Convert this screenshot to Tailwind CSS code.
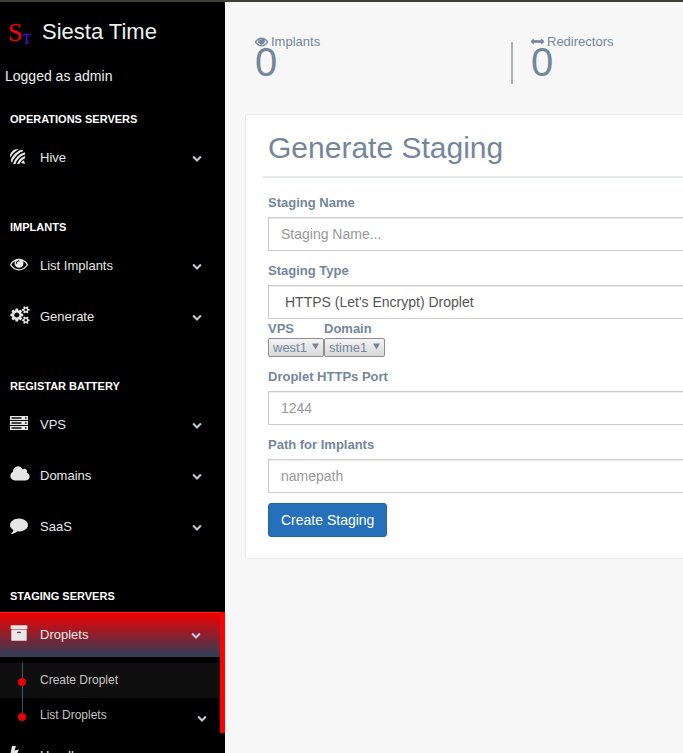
<!DOCTYPE html>
<html lang="en">
<head>
<meta charset="utf-8">
<title>Siesta Time</title>
<script src="https://cdn.jsdelivr.net/npm/@tailwindcss/browser@4"></script>
</head>
<body class="h-screen overflow-hidden bg-[#f7f7f7] font-['Liberation_Sans',Arial,sans-serif] text-[13px] leading-[18px] text-[#73879c]">
<svg class="hidden" aria-hidden="true">
  <symbol id="chevron" viewBox="0 0 1792 1792"><path d="M1683 808l-742 741q-19 19-45 19t-45-19l-742-741q-19-19-19-45.5t19-45.5l166-165q19-19 45-19t45 19l531 531 531-531q19-19 45-19t45 19l166 165q19 19 19 45.5t-19 45.5z"/></symbol>
  <symbol id="eye" viewBox="0 0 1792 1792"><path d="M1664 960q-152-236-381-353 61 104 61 225 0 185-131.5 316.5t-316.5 131.5-316.5-131.5-131.5-316.5q0-121 61-225-229 117-381 353 133 205 333.5 326.5t434.5 121.5 434.5-121.5 333.5-326.5zm-720-384q0-20-14-34t-34-14q-125 0-214.5 89.5t-89.5 214.5q0 20 14 34t34 14 34-14 14-34q0-86 61-147t147-61q20 0 34-14t14-34zm848 384q0 34-20 69-140 230-376.5 368.5t-499.5 138.5-499.5-139-376.5-368q-20-35-20-69t20-69q140-229 376.5-368t499.5-139 499.5 139 376.5 368q20 35 20 69z"/></symbol>
</svg>
<div class="flex h-full border-t-2 border-[#3f3f3a]">

  <aside class="w-[225px] shrink-0 bg-black text-[#e7e7e7]">
    <a href="#" class="flex h-[60px] items-center pl-2">
      <span class="flex w-[34px] items-baseline pt-px font-['Liberation_Serif',serif]" aria-hidden="true"><span class="text-[26px] leading-[30px] text-[#f00]">S</span><span class="relative top-[3px] text-[14px] leading-4 text-[#5010ff]">T</span></span>
      <span class="text-[22px] leading-[30px] text-[#ecf0f1]">Siesta Time</span>
    </a>
    <p class="mt-1 pl-[5px] text-[14px] leading-5 text-[#ecf0f1]">Logged as admin</p>

    <nav class="pt-[25px]">
      <section>
        <h3 class="mb-2 pl-[10px] text-[11px] leading-4 font-bold text-white uppercase">Operations Servers</h3>
        <ul>
          <li class="mb-1.5"><a href="#" class="flex h-[45px] items-center border-t border-transparent pl-[10px] pr-[23px]">
            <svg class="mb-1 h-[15px] w-[15px]" viewBox="0 0 15 15" fill="none" stroke="#e7e7e7" stroke-width="2.2"><clipPath id="disc"><path d="M8 0Q12 0 15 3V15H3Q0 12 0 8Q0 0 8 0Z"/></clipPath><g clip-path="url(#disc)"><circle cx="19" cy="19" r="22.600"/><circle cx="19" cy="19" r="18.900"/><circle cx="19" cy="19" r="15.200"/><circle cx="19" cy="19" r="11.500"/></g><path d="M15 15L14 11.200Q12 12.300 11 14Z" fill="#e7e7e7" stroke="none"/></svg>
            <span class="ml-[15px] flex-1">Hive</span><svg class="h-[10px] w-[10px] fill-[#bfcbd9]"><use href="#chevron"/></svg></a></li>
        </ul>
      </section>

      <section class="mt-[39px]">
        <h3 class="mb-2 pl-[10px] text-[11px] leading-4 font-bold text-white uppercase">Implants</h3>
        <ul>
          <li class="mb-1.5"><a href="#" class="flex h-[45px] items-center border-t border-transparent pl-[10px] pr-[23px]">
            <svg class="mb-1 h-[18px] w-[18px] fill-[#e7e7e7]"><use href="#eye"/></svg>
            <span class="ml-3 flex-1">List Implants</span><svg class="h-[10px] w-[10px] fill-[#bfcbd9]"><use href="#chevron"/></svg></a></li>
          <li class="mb-1.5"><a href="#" class="flex h-[45px] items-center border-t border-transparent pl-[10px] pr-[23px]">
            <svg class="mb-1 h-[18px] w-[20px] fill-[#e7e7e7]" viewBox="0 0 1920 1792"><path d="M896 896q0-106-75-181t-181-75-181 75-75 181 75 181 181 75 181-75 75-181zm768 512q0-52-38-90t-90-38-90 38-38 90q0 53 37.500 90.500t90.500 37.500 90.500-37.500 37.500-90.500zm0-1024q0-52-38-90t-90-38-90 38-38 90q0 53 37.500 90.500t90.500 37.500 90.500-37.500 37.500-90.500zm-384 421v185q0 10-7 19.500t-16 10.500l-155 24q-11 35-32 76 34 48 90 115 7 11 7 20 0 12-7 19-23 30-82.500 89.500t-78.500 59.500q-11 0-21-7l-115-90q-37 19-77 31-11 108-23 155-7 24-30 24h-186q-11 0-20-7.500t-10-17.500l-23-153q-34-10-75-31l-118 89q-7 7-20 7-11 0-21-8-144-133-144-160 0-9 7-19 10-14 41-53t47-61q-23-44-35-82l-152-24q-10-1-17-9.500t-7-19.500v-185q0-10 7-19.500t16-10.500l155-24q11-35 32-76-34-48-90-115-7-11-7-20 0-12 7-20 22-30 82-89t79-59q11 0 21 7l115 90q34-18 77-32 11-108 23-154 7-24 30-24h186q11 0 20 7.500t10 17.500l23 153q34 10 75 31l118-89q8-7 20-7 11 0 21 8 144 133 144 160 0 8-7 19-12 16-42 54t-45 60q23 48 34 82l152 23q10 2 17 10.500t7 19.500zm640 533v140q0 16-149 31-12 27-30 52 51 113 51 138 0 4-4 7-122 71-124 71-8 0-46-47t-52-68q-20 2-30 2t-30-2q-14 21-52 68t-46 47q-2 0-124-71-4-3-4-7 0-25 51-138-18-25-30-52-149-15-149-31v-140q0-16 149-31 13-29 30-52-51-113-51-138 0-4 4-7 4-2 35-20t59-34 30-16q8 0 46 46.500t52 67.500q20-2 30-2t30 2q51-71 92-112l6-2q4 0 124 70 4 3 4 7 0 25-51 138 17 23 30 52 149 15 149 31zm0-1024v140q0 16-149 31-12 27-30 52 51 113 51 138 0 4-4 7-122 71-124 71-8 0-46-47t-52-68q-20 2-30 2t-30-2q-14 21-52 68t-46 47q-2 0-124-71-4-3-4-7 0-25 51-138-18-25-30-52-149-15-149-31v-140q0-16 149-31 13-29 30-52-51-113-51-138 0-4 4-7 4-2 35-20t59-34 30-16q8 0 46 46.500t52 67.500q20-2 30-2t30 2q51-71 92-112l6-2q4 0 124 70 4 3 4 7 0 25-51 138 17 23 30 52 149 15 149 31z"/></svg>
            <span class="ml-[10px] flex-1">Generate</span><svg class="h-[10px] w-[10px] fill-[#bfcbd9]"><use href="#chevron"/></svg></a></li>
        </ul>
      </section>

      <section class="mt-[39px]">
        <h3 class="mb-2 pl-[10px] text-[11px] leading-4 font-bold text-white uppercase">Registar Battery</h3>
        <ul>
          <li class="mb-1.5"><a href="#" class="flex h-[45px] items-center border-t border-transparent pl-[10px] pr-[23px]">
            <svg class="mb-1 h-[18px] w-[18px]" viewBox="0 0 18 18" fill="#e7e7e7"><path d="M0 2h18v4H0zM0 7h18v4H0zM0 12h18v4H0z"/><path fill="#444" d="M1.500 3h10v2h-10zM1.500 8h10v2h-10zM1.500 13h10v2h-10z"/><path fill="#000" d="M15 3.200h1.500v1.500H15zM15 8.200h1.500v1.500H15zM15 13.200h1.500v1.500H15z"/></svg>
            <span class="ml-3 flex-1">VPS</span><svg class="h-[10px] w-[10px] fill-[#bfcbd9]"><use href="#chevron"/></svg></a></li>
          <li class="mb-1.5"><a href="#" class="flex h-[45px] items-center border-t border-transparent pl-[10px] pr-[23px]">
            <svg class="mb-1 h-[18px] w-[20px] fill-[#e7e7e7]" viewBox="0 0 1920 1792"><path d="M1920 1152q0 159-112.500 271.500t-271.500 112.500h-1088q-185 0-316.500-131.500t-131.500-316.500q0-132 71-241.500t187-163.500q-2-28-2-43 0-212 150-362t362-150q158 0 286.500 88t187.500 230q70-62 166-62 106 0 181 75t75 181q0 75-41 138 129 30 213 134.500t84 239.500z"/></svg>
            <span class="ml-[10px] flex-1">Domains</span><svg class="h-[10px] w-[10px] fill-[#bfcbd9]"><use href="#chevron"/></svg></a></li>
          <li class="mb-1.5"><a href="#" class="flex h-[45px] items-center border-t border-transparent pl-[10px] pr-[23px]">
            <svg class="mb-1 h-[18px] w-[18px] fill-[#e7e7e7]" viewBox="0 0 1792 1792"><path d="M1792 896q0 174-120 321.500t-326 233-450 85.500q-70 0-145-8-198 175-460 242-49 14-114 22-17 2-30.500-9t-17.500-29v-1q-3-4-.5-12t2-10 4.500-9.500l6-9 7-8.500 8-9q7-8 31-34.500t34.500-38 31-39.500 32.500-51 27-59 26-76q-157-89-247.500-220t-90.500-281q0-130 71-248.500t191-204.500 286-136.500 348-50.500q244 0 450 85.500t326 233 120 321.500z"/></svg>
            <span class="ml-3 flex-1">SaaS</span><svg class="h-[10px] w-[10px] fill-[#bfcbd9]"><use href="#chevron"/></svg></a></li>
        </ul>
      </section>

      <section class="mt-[39px]">
        <h3 class="mb-2 pl-[10px] text-[11px] leading-4 font-bold text-white uppercase">Staging Servers</h3>
        <ul>
          <li class="border-r-[5px] border-[#f00]">
            <a href="#" class="flex h-[45px] items-center border-t border-[#f22] bg-linear-to-b/srgb from-[#ee0000] to-[#2c4059] pl-[10px] pr-[19px]">
              <svg class="mb-1 h-[18px] w-[18px] fill-[#e7e7e7]" viewBox="0 0 1792 1792"><path d="M1088 832q0-26-19-45t-45-19h-256q-26 0-45 19t-19 45 19 45 45 19h256q26 0 45-19t19-45zm576-192v960q0 26-19 45t-45 19h-1408q-26 0-45-19t-19-45v-960q0-26 19-45t45-19h1408q26 0 45 19t19 45zm64-448v256q0 26-19 45t-45 19h-1536q-26 0-45-19t-19-45v-256q0-26 19-45t45-19h1536q26 0 45 19t19 45z"/></svg>
              <span class="ml-3 flex-1">Droplets</span><svg class="h-[10px] w-[10px] fill-[#bfcbd9]"><use href="#chevron"/></svg></a>
            <ul class="mt-1.5 text-[12px] text-[#c4c4c4]">
              <li><a href="#" class="relative flex h-[35px] items-center bg-[#0f0f0f] pb-[2px] pl-[40px] before:absolute before:inset-y-0 before:left-[22px] before:w-px before:bg-[#425668] after:absolute after:top-[15px] after:left-[18px] after:h-2 after:w-2 after:rounded-full after:bg-[#e80000]">Create Droplet</a></li>
              <li><a href="#" class="relative flex h-[35px] items-center pb-[2px] pl-[40px] pr-[13px] before:absolute before:top-0 before:left-[22px] before:h-4 before:w-px before:bg-[#425668] after:absolute after:top-[15px] after:left-[18px] after:h-2 after:w-2 after:rounded-full after:bg-[#e80000]"><span class="flex-1">List Droplets</span><svg class="mt-1.5 h-[10px] w-[10px] fill-[#bfcbd9]"><use href="#chevron"/></svg></a></li>
            </ul>
          </li>
          <li><a href="#" class="flex h-[45px] items-center border-t border-transparent pl-[10px] pr-[23px]">
            <svg class="mb-1 h-[18px] w-[9px] fill-[#e7e7e7]" viewBox="0 0 9 18"><path d="M2 1h4L4.500 5.500 9 4.500 3.500 17 5 8.500.3 9.500z"/></svg>
            <span class="ml-[21px] flex-1">Handler</span><svg class="h-[10px] w-[10px] fill-[#bfcbd9]"><use href="#chevron"/></svg></a></li>
        </ul>
      </section>
    </nav>
  </aside>

  <main class="min-w-0 flex-1 overflow-hidden">
    <div class="min-w-[850px] px-5">
      <div class="flex h-[112px] pt-[31px]">
        <div class="w-[266px] pl-[10px]">
          <div class="flex h-[18px] items-center gap-[3px]"><svg class="mb-[2px] h-[13px] w-[13px] fill-[#73879c] stroke-[#73879c] stroke-[60px]"><use href="#eye"/></svg>Implants</div>
          <div class="-mt-2 text-[40px] leading-[38px]">0</div>
        </div>
        <div class="mt-[9px] h-[42px] w-[2px] bg-[#adb2b5]"></div>
        <div class="pl-[18px]">
          <div class="flex h-[18px] items-center gap-[3px]"><svg class="mb-[2px] h-[13px] w-[13px] fill-[#73879c] stroke-[#73879c] stroke-[90px]" viewBox="0 0 1792 1792"><path d="M1792 896q0 26-19 45l-256 256q-19 19-45 19t-45-19-19-45v-128h-1024v128q0 26-19 45t-45 19-45-19l-256-256q-19-19-19-45t19-45l256-256q19-19 45-19t45 19 19 45v128h1024v-128q0-26 19-45t45-19 45 19l256 256q19 19 19 45z"/></svg>Redirectors</div>
          <div class="-mt-2 text-[40px] leading-[38px]">0</div>
        </div>
      </div>

      <div class="border border-[#e6e9ed] bg-white px-[17px] pt-[10px] pb-[21px]">
        <h2 class="border-b-2 border-[#e6e9ed] px-[5px] pt-[6px] pb-[11px] text-[30px] leading-[34px]">Generate Staging</h2>
        <form class="px-[5px] pt-4">
          <label for="name" class="mb-[5px] block font-bold">Staging Name</label>
          <input id="name" type="text" placeholder="Staging Name..." class="mb-[11px] block h-[34px] w-full border border-[#ccc] px-3 text-[14px] text-[#555] shadow-[inset_0_1px_1px_rgba(0,0,0,0.075)] placeholder:text-[#999]">
          <label for="type" class="mb-[5px] block font-bold">Staging Type</label>
          <select id="type" class="block h-[34px] w-full appearance-none border border-[#ccc] bg-white px-4 text-[14px] text-[#555] shadow-[inset_0_1px_1px_rgba(0,0,0,0.075)]"><option>HTTPS (Let's Encrypt) Droplet</option></select>
          <div class="mb-[11px] flex pt-px">
            <div class="w-[56px]">
              <label for="vps" class="block font-bold">VPS</label>
              <div class="relative">
                <select id="vps" class="block h-[19px] w-full appearance-none rounded-[2px] border border-[#8f8f8f] bg-linear-to-b from-[#f4f4f4] to-[#d8d8d8] pl-1 text-[13px] leading-[17px] text-[#73879c]"><option>west1</option></select>
                <svg class="pointer-events-none absolute top-[5px] right-[5px] h-[7px] w-[7px] fill-[#73879c]" viewBox="0 0 7 7"><path d="M0 .5h7L3.500 6.500z"/></svg>
              </div>
            </div>
            <div class="w-[61px]">
              <label for="domain" class="block font-bold">Domain</label>
              <div class="relative">
                <select id="domain" class="block h-[19px] w-full appearance-none rounded-[2px] border border-[#8f8f8f] bg-linear-to-b from-[#f4f4f4] to-[#d8d8d8] pl-1 text-[13px] leading-[17px] text-[#73879c]"><option>stime1</option></select>
                <svg class="pointer-events-none absolute top-[5px] right-[5px] h-[7px] w-[7px] fill-[#73879c]" viewBox="0 0 7 7"><path d="M0 .5h7L3.500 6.500z"/></svg>
              </div>
            </div>
          </div>
          <label for="port" class="mb-[5px] block font-bold">Droplet HTTPs Port</label>
          <input id="port" type="text" placeholder="1244" class="mb-[11px] block h-[34px] w-full border border-[#ccc] px-3 text-[14px] text-[#555] shadow-[inset_0_1px_1px_rgba(0,0,0,0.075)] placeholder:text-[#999]">
          <label for="path" class="mb-[5px] block font-bold">Path for Implants</label>
          <input id="path" type="text" placeholder="namepath" class="mb-[10px] block h-[34px] w-full border border-[#ccc] px-3 text-[14px] text-[#555] shadow-[inset_0_1px_1px_rgba(0,0,0,0.075)] placeholder:text-[#999]">
          <button type="submit" class="block h-[34px] rounded-[3px] border border-[#2265a8] bg-[#2570b9] px-3 text-[14px] leading-5 text-white">Create Staging</button>
        </form>
      </div>
    </div>
  </main>
</div>
</body>
</html>
